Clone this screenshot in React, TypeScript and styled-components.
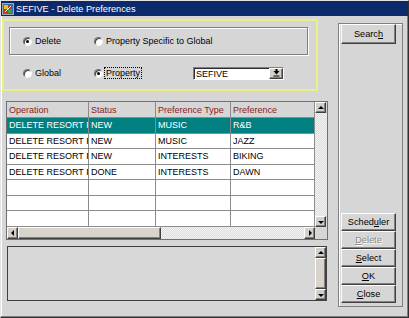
import React from 'react';
import styled, { createGlobalStyle, css } from 'styled-components';

const GlobalStyle = createGlobalStyle`
  html, body {
    margin: 0;
    padding: 0;
    background: #ffffff;
  }
  * {
    box-sizing: border-box;
  }
  body {
    font-family: 'Liberation Sans', Arial, sans-serif;
    font-size: 9px;
  }
`;

const raised = css`
  border-top: 1px solid #ffffff;
  border-left: 1px solid #ffffff;
  border-right: 1px solid #404040;
  border-bottom: 1px solid #404040;
  box-shadow: inset -1px -1px 0 #808080;
  background: #d4d0c8;
`;

const dither = css`
  background: repeating-conic-gradient(#dcdcdc 0 25%, #f4f4f4 0 50%) 0 0 / 2px 2px;
`;

type Row = [string, string, string, string];

const rows: Row[] = [
  ['DELETE RESORT PREFERENCE', 'NEW', 'MUSIC', 'R&B'],
  ['DELETE RESORT PREFERENCE', 'NEW', 'MUSIC', 'JAZZ'],
  ['DELETE RESORT PREFERENCE', 'NEW', 'INTERESTS', 'BIKING'],
  ['DELETE RESORT PREFERENCE', 'DONE', 'INTERESTS', 'DAWN'],
  ['', '', '', ''],
  ['', '', '', ''],
  ['', '', '', ''],
];

const columns = ['Operation', 'Status', 'Preference Type', 'Preference'];

function AppIcon() {
  return (
    <svg width="12" height="12" viewBox="0 0 12 12">
      <rect x="0.5" y="0.5" width="11" height="11" fill="#3a6ea5" stroke="#9ab" />
      <rect x="2" y="2" width="4" height="4" fill="#e8c020" />
      <rect x="6" y="2" width="4" height="4" fill="#d03020" />
      <rect x="2" y="6" width="4" height="4" fill="#d03020" />
      <rect x="6" y="6" width="4" height="4" fill="#40a040" />
      <path d="M3 9 L9 3" stroke="#fff" strokeWidth="1" />
    </svg>
  );
}

function Arrow({ dir }: { dir: 'up' | 'down' | 'left' | 'right' }) {
  const pts = {
    up: '1,5 4,2 7,5',
    down: '1,3 4,6 7,3',
    left: '5,1 2,4 5,7',
    right: '3,1 6,4 3,7',
  }[dir];
  return (
    <svg width="8" height="8" viewBox="0 0 8 8">
      <polygon points={pts} fill="#000" />
    </svg>
  );
}

function DropIcon() {
  return (
    <svg width="7" height="8" viewBox="0 0 7 8">
      <rect x="2.5" y="0" width="2" height="2" fill="#000" />
      <polygon points="0.5,2 6.5,2 3.5,5.5" fill="#000" />
      <rect x="0.5" y="6.5" width="6" height="1" fill="#000" />
    </svg>
  );
}

export default function App() {
  return (
    <>
      <GlobalStyle />
      <Window>
        <TitleBar>
          <AppIcon />
          <span>SEFIVE - Delete Preferences</span>
        </TitleBar>
        <Body>
          <LeftColumn>
            <FilterGroup>
              <EtchedBox>
                <RadioOption $width={71}>
                  <RadioDot $checked />
                  <span>Delete</span>
                </RadioOption>
                <RadioOption>
                  <RadioDot />
                  <span>Property Specific to Global</span>
                </RadioOption>
              </EtchedBox>
              <ScopeRow>
                <RadioOption $width={71}>
                  <RadioDot />
                  <span>Global</span>
                </RadioOption>
                <RadioOption $width={99}>
                  <RadioDot $checked />
                  <FocusLabel>Property</FocusLabel>
                </RadioOption>
                <Combo>
                  <ComboText>SEFIVE</ComboText>
                  <ComboButton>
                    <DropIcon />
                  </ComboButton>
                </Combo>
              </ScopeRow>
            </FilterGroup>

            <TableFrame>
              <Grid>
                {columns.map((c) => (
                  <HeaderCell key={c}>{c}</HeaderCell>
                ))}
                {rows.map((r, i) =>
                  r.map((v, j) => (
                    <Cell key={`${i}-${j}`} $selected={i === 0}>
                      {v}
                    </Cell>
                  ))
                )}
              </Grid>
              <VScroll>
                <ScrollButton>
                  <Arrow dir="up" />
                </ScrollButton>
                <Track />
                <ScrollButton>
                  <Arrow dir="down" />
                </ScrollButton>
              </VScroll>
              <HScroll>
                <ScrollButton>
                  <Arrow dir="left" />
                </ScrollButton>
                <HThumb />
                <Track />
                <ScrollButton>
                  <Arrow dir="right" />
                </ScrollButton>
              </HScroll>
              <Corner />
            </TableFrame>

            <Memo>
              <MemoScroll>
                <ScrollButton>
                  <Arrow dir="up" />
                </ScrollButton>
                <VThumb />
                <ScrollButton>
                  <Arrow dir="down" />
                </ScrollButton>
              </MemoScroll>
            </Memo>
          </LeftColumn>

          <SidePanel>
            <ActionButton $tall>
              Searc<u>h</u>
            </ActionButton>
            <ButtonStack>
              <ActionButton>
                Sched<u>u</u>ler
              </ActionButton>
              <ActionButton $disabled>
                <u>D</u>elete
              </ActionButton>
              <ActionButton>
                <u>S</u>elect
              </ActionButton>
              <ActionButton>
                <u>O</u>K
              </ActionButton>
              <ActionButton>
                <u>C</u>lose
              </ActionButton>
            </ButtonStack>
          </SidePanel>
        </Body>
      </Window>
    </>
  );
}

const Window = styled.div`
  width: 409px;
  height: 318px;
  display: flex;
  flex-direction: column;
  background: #d6d6d6;
  border-top: 1px solid #e4e4e4;
  border-left: 1px solid #e4e4e4;
  border-right: 1px solid #303030;
  border-bottom: 1px solid #303030;
  box-shadow: inset -1px -1px 0 #808080, inset 1px 1px 0 #ffffff;
  color: #000;
`;

const TitleBar = styled.div`
  height: 15px;
  flex-shrink: 0;
  display: flex;
  align-items: center;
  gap: 2px;
  padding-left: 1px;
  background: #0c2a6b;
  color: #ffffff;
  font-size: 9.2px;
  white-space: nowrap;
`;

const Body = styled.div`
  flex: 1;
  display: flex;
  gap: 11px;
  padding: 3px 0 0 1px;
`;

const LeftColumn = styled.div`
  width: 325px;
  display: flex;
  flex-direction: column;
`;

const FilterGroup = styled.div`
  width: 316px;
  height: 72px;
  border: 2px solid #eeee86;
  padding: 6px 0 0 5px;
  display: flex;
  flex-direction: column;
`;

const EtchedBox = styled.div`
  width: 299px;
  height: 28px;
  flex-shrink: 0;
  display: flex;
  align-items: center;
  padding-left: 13px;
  border: 1px solid #808080;
  box-shadow: inset 1px 1px 0 #ffffff, 1px 1px 0 #ffffff;
`;

const ScopeRow = styled.div`
  flex: 1;
  display: flex;
  align-items: center;
  padding: 2px 0 0 14px;
`;

const RadioOption = styled.label<{ $width?: number }>`
  display: flex;
  align-items: center;
  gap: 3px;
  white-space: nowrap;
  ${({ $width }) => ($width ? `width: ${$width}px;` : '')}
`;

const RadioDot = styled.span<{ $checked?: boolean }>`
  position: relative;
  width: 9px;
  height: 9px;
  flex-shrink: 0;
  border-radius: 50%;
  background: #ffffff;
  border: 1px solid;
  border-color: #707070 #f4f4f4 #f4f4f4 #707070;
  box-shadow: inset 1px 1px 0 #404040;

  &::after {
    content: '';
    display: ${({ $checked }) => ($checked ? 'block' : 'none')};
    position: absolute;
    left: 2px;
    top: 2px;
    width: 3px;
    height: 3px;
    border-radius: 50%;
    background: #000;
  }
`;

const FocusLabel = styled.span`
  outline: 1px dotted #000;
  padding: 0 1px;
  margin-left: -1px;
`;

const Combo = styled.div`
  width: 91px;
  height: 13px;
  display: flex;
  border: 1px solid;
  border-color: #808080 #ffffff #ffffff #808080;
  box-shadow: inset 1px 1px 0 #303030;
  background: #ffffff;
`;

const ComboText = styled.div`
  flex: 1;
  padding: 1px 0 0 2px;
  line-height: 10px;
`;

const ComboButton = styled.div`
  ${raised};
  width: 14px;
  display: flex;
  align-items: center;
  justify-content: center;
`;

const TableFrame = styled.div`
  margin: 10px 0 0 4px;
  width: 322px;
  height: 139px;
  border: 1px solid #707070;
  display: grid;
  grid-template-columns: 308px 12px;
  grid-template-rows: 125px 12px;
  background: #ffffff;
`;

const Grid = styled.div`
  display: grid;
  grid-template-columns: 82px 67px 75px 84px;
  grid-template-rows: 16px repeat(7, 15.57px);
  overflow: hidden;
`;

const cellBase = css`
  border-right: 1px solid #8c8c8c;
  border-bottom: 1px solid #8c8c8c;
  padding-left: 2px;
  display: flex;
  align-items: center;
  white-space: nowrap;
  overflow: hidden;
`;

const HeaderCell = styled.div`
  ${cellBase};
  background: #d6d6d6;
  color: #8a1c1c;
`;

const Cell = styled.div<{ $selected?: boolean }>`
  ${cellBase};
  background: ${({ $selected }) => ($selected ? '#008080' : '#ffffff')};
  color: ${({ $selected }) => ($selected ? '#ffffff' : '#000000')};
`;

const ScrollButton = styled.div`
  ${raised};
  width: 11px;
  height: 11px;
  flex-shrink: 0;
  display: flex;
  align-items: center;
  justify-content: center;
`;

const Track = styled.div`
  flex: 1;
  ${dither};
`;

const VScroll = styled.div`
  display: flex;
  flex-direction: column;
  background: #d6d6d6;
`;

const HScroll = styled.div`
  display: flex;
  background: #d6d6d6;
  & > ${ScrollButton} {
    height: 12px;
  }
`;

const HThumb = styled.div`
  ${raised};
  width: 143px;
  background: #d8d4cc;
`;

const Corner = styled.div`
  background: #d6d6d6;
`;

const Memo = styled.div`
  margin: 6px 0 0 5px;
  width: 320px;
  height: 55px;
  border: 1px solid #404040;
  background: #d8d8d8;
  display: flex;
  justify-content: flex-end;
`;

const MemoScroll = styled.div`
  width: 11px;
  display: flex;
  flex-direction: column;
`;

const VThumb = styled.div`
  ${raised};
  flex: 1;
  background: #d8d4cc;
`;

const SidePanel = styled.div`
  margin-top: 4px;
  width: 65px;
  height: 284px;
  border: 1px solid #808080;
  box-shadow: inset 1px 1px 0 #ffffff;
  padding: 0 2px 3px 2px;
  display: flex;
  flex-direction: column;
  justify-content: space-between;
`;

const ButtonStack = styled.div`
  display: flex;
  flex-direction: column;
`;

const ActionButton = styled.div<{ $tall?: boolean; $disabled?: boolean }>`
  ${raised};
  background: #d6d6d6;
  width: 55px;
  height: ${({ $tall }) => ($tall ? 20 : 18)}px;
  display: flex;
  align-items: center;
  justify-content: center;
  color: ${({ $disabled }) => ($disabled ? '#8a8a8a' : '#000')};
  text-shadow: ${({ $disabled }) => ($disabled ? '1px 1px 0 #ffffff' : 'none')};
  font-size: 9.2px;
`;
